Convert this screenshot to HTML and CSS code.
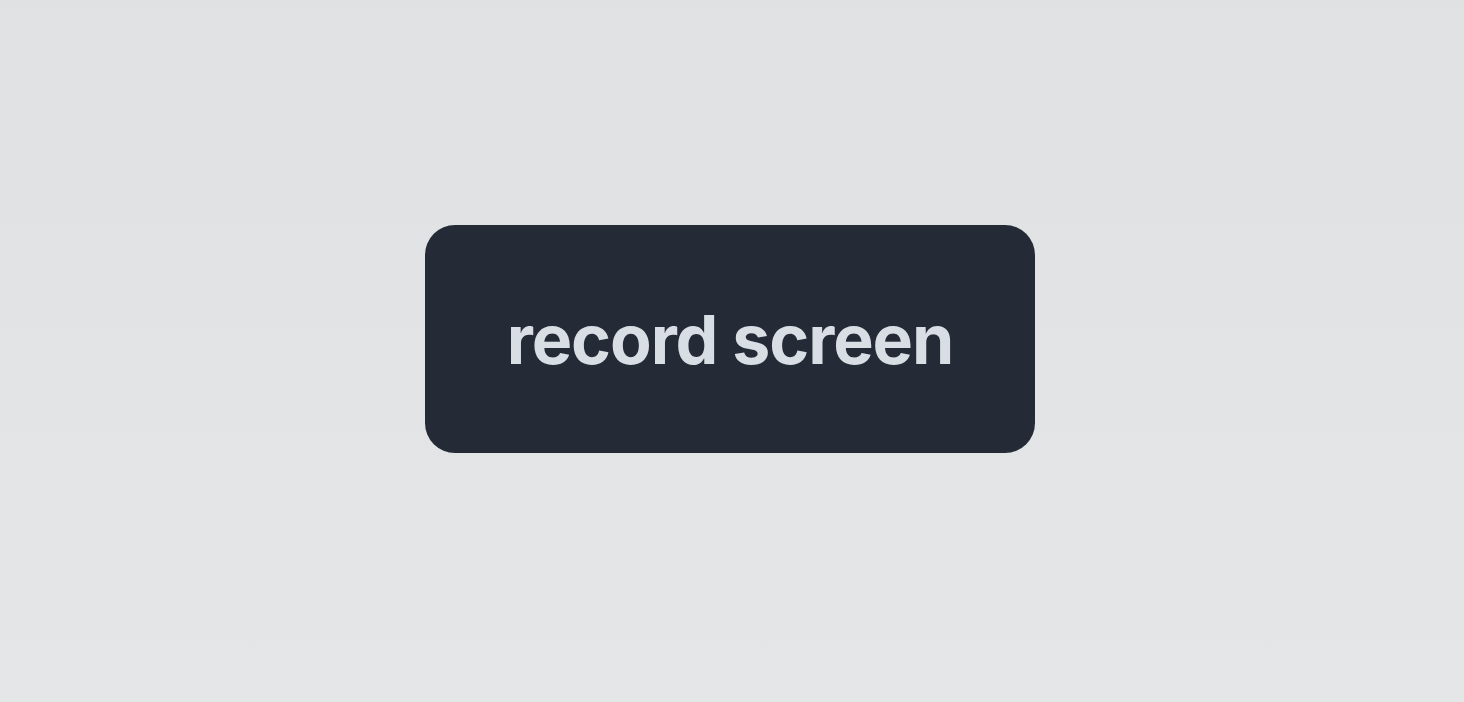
FILE: index.html
```html
<!DOCTYPE html>
<html>
<head>
<meta charset="utf-8">
<link rel="stylesheet" href="styles.css">
</head>
<body>
<main class="stage">
  <button class="record-btn">record screen</button>
</main>
</body>
</html>
```

FILE: styles.css
```css
html, body {
  margin: 0;
  padding: 0;
  height: 100%;
}
body {
  background: linear-gradient(180deg, #dfe1e3 0%, #e2e4e6 60%, #e4e6e8 100%);
  font-family: Inter, "Liberation Sans", Arial, sans-serif;
}
.stage {
  display: flex;
  justify-content: center;
  padding-top: 225px;
  padding-left: 0;
  padding-right: 4px;
}
.record-btn {
  width: 610px;
  height: 228px;
  border: none;
  border-radius: 30px;
  background: #252b36;
  color: #d9dde4;
  font-family: Inter, "Liberation Sans", Arial, sans-serif;
  font-weight: 700;
  font-size: 68px;
  letter-spacing: -1.1px;
  display: flex;
  align-items: center;
  justify-content: center;
  padding: 0 0 1px 0;
  cursor: pointer;
}
```
